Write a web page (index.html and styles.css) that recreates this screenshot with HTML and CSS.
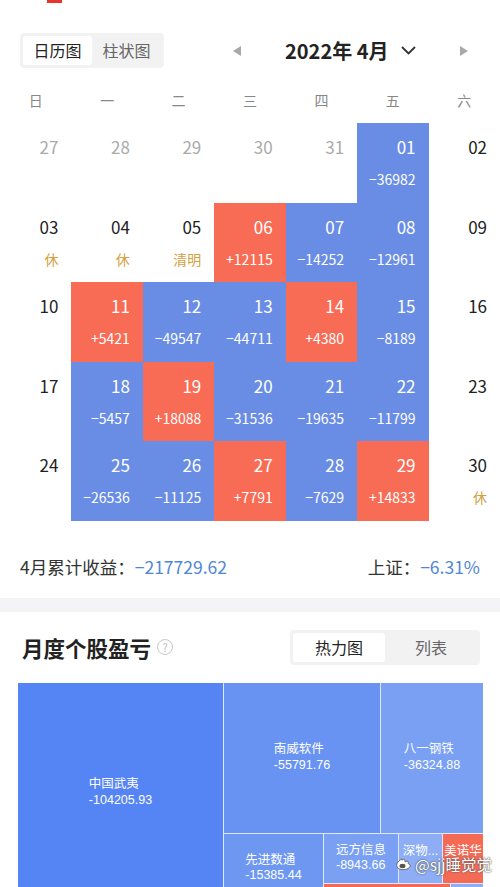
FILE: index.html
```html
<!DOCTYPE html>
<html lang="zh-CN">
<head>
  <meta charset="UTF-8" />
  <meta name="viewport" content="width=device-width, initial-scale=1" />
  <title>月度收益</title>
  <link rel="stylesheet" href="styles.css">
</head>
<body>

  <div class="topmark"><span></span></div>

  <div class="header">
    <div class="seg">
      <span class="seg-item active">日历图</span>
      <span class="seg-item">柱状图</span>
    </div>
    <div class="nav">
      <span class="tri tri-left"></span>
      <span class="nav-title">2022年 4月</span>
      <svg class="chev" width="15" height="9" viewBox="0 0 15 9"><polyline points="1,1 7.5,7.5 14,1" fill="none" stroke="#333" stroke-width="1.8"/></svg>
      <span class="tri tri-right"></span>
    </div>
  </div>

  <div class="weekdays">
    <span>日</span><span>一</span><span>二</span><span>三</span><span>四</span><span>五</span><span>六</span>
  </div>

  <div class="cal">
    <!-- week 1 -->
    <div class="day muted"><div class="num">27</div></div>
    <div class="day muted"><div class="num">28</div></div>
    <div class="day muted"><div class="num">29</div></div>
    <div class="day muted"><div class="num">30</div></div>
    <div class="day muted"><div class="num">31</div></div>
    <div class="day loss"><div class="num">01</div><div class="val">−36982</div></div>
    <div class="day"><div class="num">02</div></div>
    <!-- week 2 -->
    <div class="day"><div class="num">03</div><div class="note">休</div></div>
    <div class="day"><div class="num">04</div><div class="note">休</div></div>
    <div class="day"><div class="num">05</div><div class="note">清明</div></div>
    <div class="day gain"><div class="num">06</div><div class="val">+12115</div></div>
    <div class="day loss"><div class="num">07</div><div class="val">−14252</div></div>
    <div class="day loss"><div class="num">08</div><div class="val">−12961</div></div>
    <div class="day"><div class="num">09</div></div>
    <!-- week 3 -->
    <div class="day"><div class="num">10</div></div>
    <div class="day gain"><div class="num">11</div><div class="val">+5421</div></div>
    <div class="day loss"><div class="num">12</div><div class="val">−49547</div></div>
    <div class="day loss"><div class="num">13</div><div class="val">−44711</div></div>
    <div class="day gain"><div class="num">14</div><div class="val">+4380</div></div>
    <div class="day loss"><div class="num">15</div><div class="val">−8189</div></div>
    <div class="day"><div class="num">16</div></div>
    <!-- week 4 -->
    <div class="day"><div class="num">17</div></div>
    <div class="day loss"><div class="num">18</div><div class="val">−5457</div></div>
    <div class="day gain"><div class="num">19</div><div class="val">+18088</div></div>
    <div class="day loss"><div class="num">20</div><div class="val">−31536</div></div>
    <div class="day loss"><div class="num">21</div><div class="val">−19635</div></div>
    <div class="day loss"><div class="num">22</div><div class="val">−11799</div></div>
    <div class="day"><div class="num">23</div></div>
    <!-- week 5 -->
    <div class="day"><div class="num">24</div></div>
    <div class="day loss"><div class="num">25</div><div class="val">−26536</div></div>
    <div class="day loss"><div class="num">26</div><div class="val">−11125</div></div>
    <div class="day gain"><div class="num">27</div><div class="val">+7791</div></div>
    <div class="day loss"><div class="num">28</div><div class="val">−7629</div></div>
    <div class="day gain"><div class="num">29</div><div class="val">+14833</div></div>
    <div class="day"><div class="num">30</div><div class="note">休</div></div>
  </div>

  <div class="summary">
    <span>4月累计收益：<b class="blue">−217729.62</b></span>
    <span>上证：<b class="blue">−6.31%</b></span>
  </div>

  <div class="band"></div>

  <div class="sec-head">
    <div class="sec-title">月度个股盈亏 <span class="help">?</span></div>
    <div class="seg seg-wide">
      <span class="seg-item active">热力图</span>
      <span class="seg-item">列表</span>
    </div>
  </div>

  <div class="tm">
    <div class="node c1 w-big"><div class="lbl">中国武夷<br>-104205.93</div></div>
    <div class="tm-col">
      <div class="tm-row h-top">
        <div class="node c2 w-nw"><div class="lbl">南威软件<br>-55791.76</div></div>
        <div class="node c3 grow"><div class="lbl">八一钢铁<br>-36324.88</div></div>
      </div>
      <div class="tm-row grow">
        <div class="node c4 w-xj"><div class="lbl">先进数通<br>-15385.44</div></div>
        <div class="tm-col grow">
          <div class="tm-row h-small">
            <div class="node c3 w-yf"><div class="lbl">远方信息<br>-8943.66</div></div>
            <div class="node c5 w-sw top"><div class="lbl">深物...</div></div>
            <div class="node red grow top"><div class="lbl">美诺华</div></div>
          </div>
          <div class="tm-row grow">
            <div class="node red w-red"></div>
            <div class="node c5 grow"></div>
          </div>
        </div>
      </div>
    </div>
    <div class="watermark">
      <svg width="18" height="15" viewBox="0 0 18 15"><path d="M7 3C3.5 4.5 1 7.5 2 10.5c1 3 6 4 10 2.5 3-1.2 4-3.4 2.5-4.6-.8-.6-1.6-.3-1.2-1.6.4-1.4-.6-2-2.4-1.3-1 .4-1.2.1-1-.7.2-1.5-.8-2.2-2.9-.8z" fill="#fff" stroke="#666" stroke-width="1"/><ellipse cx="7.5" cy="10" rx="3" ry="2.2" fill="#555"/></svg>
      <span>@sjj睡觉觉</span>
    </div>
  </div>

</body>
</html>
```

FILE: styles.css
```css
body {
  font-family: "Noto Sans CJK SC", "Noto Sans", sans-serif;
  background: white;
  margin: 0;
  padding: 0;
  color: #222;
}
.topmark {
  height: 3px;
}
.topmark span {
  display: block;
  width: 15px;
  height: 3px;
  margin-left: 47px;
  background: #e8342e;
}
.header {
  display: flex;
  align-items: center;
  padding: 30px 0 0 20px;
  height: 35px;
}
.seg {
  display: flex;
  background: #f2f2f3;
  border-radius: 4px;
  padding: 3px;
}
.seg-item {
  width: 69px;
  height: 29px;
  line-height: 29px;
  text-align: center;
  font-size: 16px;
  color: #666;
  border-radius: 3px;
}
.seg-item.active {
  background: white;
  color: #222;
}
.nav {
  display: flex;
  align-items: center;
}
.tri {
  width: 0;
  height: 0;
  border-top: 5px solid transparent;
  border-bottom: 5px solid transparent;
}
.tri-left {
  border-right: 8px solid #a9a9a9;
  margin-left: 69px;
}
.tri-right {
  border-left: 8px solid #a9a9a9;
  margin-left: 44px;
}
.nav-title {
  margin-left: 44px;
  font-size: 20px;
  font-weight: 700;
  line-height: 28px;
  color: #222;
}
.chev {
  margin-left: 12px;
}
.weekdays {
  display: grid;
  grid-template-columns: repeat(7, 1fr);
  margin-top: 17px;
  height: 30px;
  line-height: 30px;
  text-align: center;
  font-size: 14px;
  color: #888;
}
.cal {
  display: grid;
  grid-template-columns: repeat(7, 1fr);
  grid-auto-rows: 79.6px;
  margin-top: 8px;
}
.day {
  padding: 12px 13px 0 0;
  text-align: right;
}
.num {
  font-size: 17px;
  line-height: 24px;
  color: #222;
}
.muted .num {
  color: #aaa;
}
.val {
  font-size: 14px;
  line-height: 20px;
  margin-top: 10px;
  color: white;
}
.note {
  font-size: 14px;
  line-height: 20px;
  margin-top: 10px;
  color: #d3a040;
}
.loss {
  background: #698de4;
}
.gain {
  background: #f86c56;
}
.loss .num, .gain .num {
  color: white;
}
.summary {
  display: flex;
  justify-content: space-between;
  padding: 0 20px;
  margin-top: 34px;
  font-size: 17.5px;
  line-height: 24px;
  color: #333;
}
.summary b {
  font-weight: 400;
}
.blue {
  color: #4f86d6;
}
.band {
  height: 14px;
  margin-top: 19px;
  background: #f4f4f6;
}
.sec-head {
  display: flex;
  align-items: center;
  justify-content: space-between;
  padding: 18px 20px 0 22px;
}
.sec-title {
  display: flex;
  align-items: center;
  font-size: 21.5px;
  font-weight: 600;
  color: #222;
}
.help {
  display: inline-block;
  width: 14px;
  height: 14px;
  margin-left: 6px;
  border: 1.3px solid #c8c8c8;
  border-radius: 50%;
  text-align: center;
  font-size: 11px;
  line-height: 14px;
  font-weight: 400;
  color: #bbb;
}
.seg-wide .seg-item {
  width: 92px;
}
.tm {
  position: relative;
  display: flex;
  gap: 1px;
  height: 220px;
  margin: 18px 17px 0 18px;
  background: #dfe7fb;
}
.tm-col {
  display: flex;
  flex-direction: column;
  gap: 1px;
  flex: 1;
}
.tm-row {
  display: flex;
  gap: 1px;
}
.grow {
  flex: 1;
}
.h-top {
  height: 150px;
}
.h-small {
  height: 49px;
}
.node {
  display: flex;
  align-items: center;
  justify-content: center;
  overflow: hidden;
}
.node.top {
  align-items: flex-start;
  padding-top: 10px;
}
.lbl {
  font-family: "Liberation Sans", "Noto Sans CJK SC", sans-serif;
  font-size: 12.5px;
  line-height: 15.5px;
  color: white;
  text-align: left;
  white-space: nowrap;
}
.w-big { width: 205px; }
.w-nw { width: 156px; }
.w-xj { width: 99px; }
.w-yf { width: 74px; }
.w-sw { width: 43px; }
.w-red { width: 126px; }
.c1 { background: #5585f5; }
.c2 { background: #6993f2; }
.c3 { background: #79a0f3; }
.c4 { background: #6d97f1; }
.c5 { background: #8dadf5; }
.red { background: #f56a54; }
.watermark {
  position: absolute;
  left: 377px;
  top: 172px;
  display: flex;
  align-items: center;
  gap: 2px;
  font-size: 15.5px;
  line-height: 18px;
  white-space: nowrap;
  color: white;
  text-shadow: 0 0 2px #555, 0 0 1px #555;
}
```
